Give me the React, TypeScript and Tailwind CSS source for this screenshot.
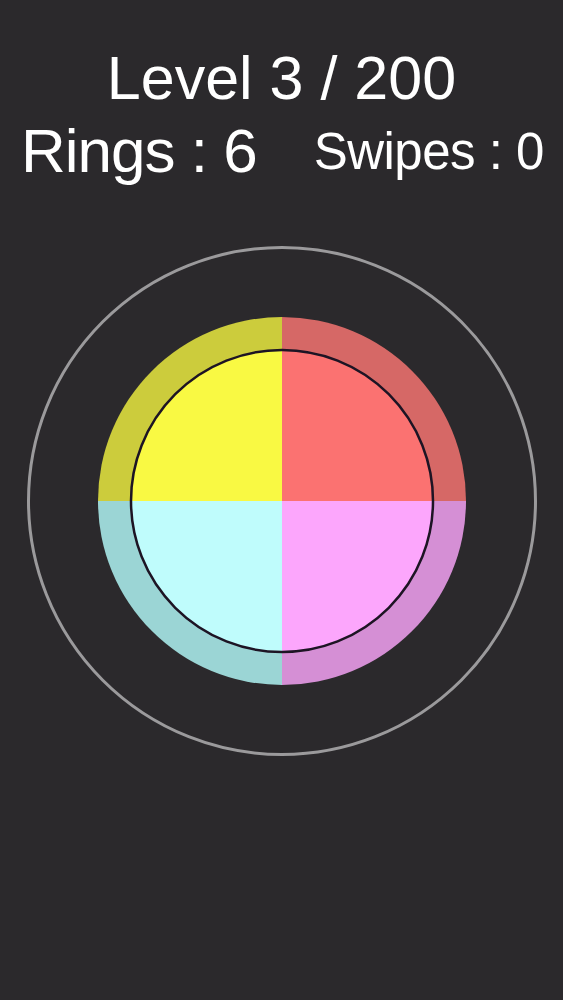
import React from "react";

function Board() {
  const c = 256;
  const R = 184;
  const r = 151;
  const q = (sx: number, sy: number, ex: number, ey: number, rad: number) =>
    `M ${c} ${c} L ${c + sx * rad} ${c + sy * rad} A ${rad} ${rad} 0 0 1 ${c + ex * rad} ${c + ey * rad} Z`;
  return (
    <svg width="512" height="512" viewBox="0 0 512 512" className="block">
      <circle cx={c} cy={c} r={253.5} fill="none" stroke="#9b9a9c" strokeWidth="3" />
      <path d={q(-1, 0, 0, -1, R)} fill="#cccc3c" />
      <path d={q(0, -1, 1, 0, R)} fill="#d66866" />
      <path d={q(1, 0, 0, 1, R)} fill="#d58fd5" />
      <path d={q(0, 1, -1, 0, R)} fill="#9bd5d5" />
      <path d={q(-1, 0, 0, -1, r)} fill="#f9f943" />
      <path d={q(0, -1, 1, 0, r)} fill="#fb7271" />
      <path d={q(1, 0, 0, 1, r)} fill="#fca6fc" />
      <path d={q(0, 1, -1, 0, r)} fill="#bffcfc" />
      <circle cx={c} cy={c} r={r} fill="none" stroke="#1d1424" strokeWidth="2.5" />
    </svg>
  );
}

export default function App() {
  return (
    <div
      className="w-[563px] h-[1000px] bg-[#2b292c] text-white overflow-hidden"
      style={{ fontFamily: '"Liberation Sans", Arial, sans-serif' }}
    >
      <div className="pt-[48px] text-center text-[61px] leading-none">Level 3 / 200</div>
      <div className="flex items-start mt-[11px]">
        <div className="ml-[21px] text-[62px] leading-none tracking-[-1px]">Rings : 6</div>
        <div className="ml-[57px] mt-[6px] text-[51px] leading-none tracking-[-0.5px]">Swipes : 0</div>
      </div>
      <div className="ml-[25.5px] mt-[63px]">
        <Board />
      </div>
    </div>
  );
}
